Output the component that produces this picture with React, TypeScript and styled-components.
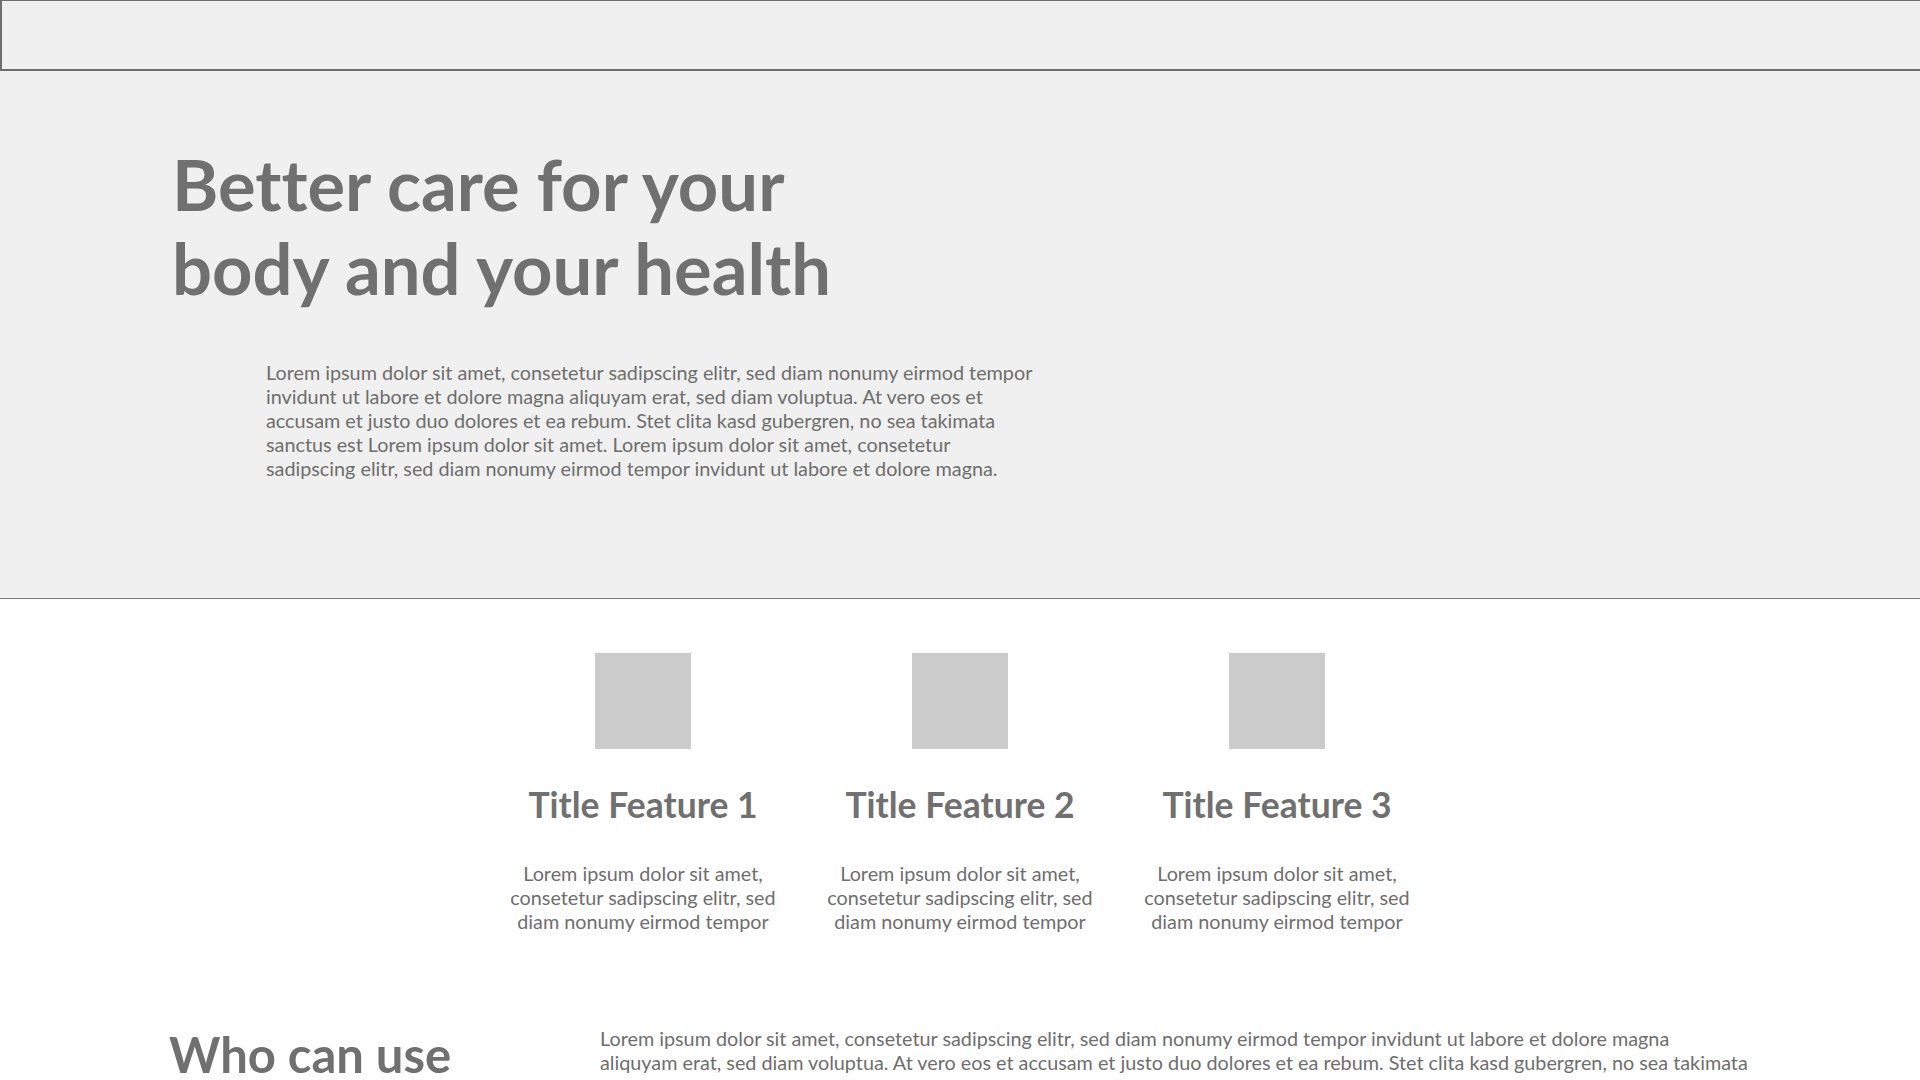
import styled, { createGlobalStyle } from "styled-components";

const GlobalStyle = createGlobalStyle`
  html, body {
    margin: 0;
    padding: 0;
    background: #ffffff;
    font-family: Lato, "Open Sans", sans-serif;
    font-variant-ligatures: none;
    color: #707070;
  }
  * {
    box-sizing: border-box;
  }
`;

const Page = styled.div`
  width: 100%;
  height: 1080px;
  overflow: hidden;
`;

const Header = styled.header`
  height: 71px;
  background: #f0f0f0;
  border-top: 1px solid #6e6e6e;
  border-left: 2px solid #6e6e6e;
  border-bottom: 2px solid #6e6e6e;
`;

const Hero = styled.section`
  background: #f0f0f0;
  border-bottom: 1px solid #7a7a7a;
  padding: 71px 0 118px 172px;
`;

const HeroTitle = styled.h1`
  margin: 0;
  font-size: 70.5px;
  line-height: 84px;
  font-weight: 700;
  color: #707070;
`;

const HeroText = styled.p`
  margin: 50px 0 0 94px;
  width: 775px;
  font-size: 19.8px;
  line-height: 24px;
  color: #6e6e6e;
`;

const Features = styled.section`
  display: grid;
  grid-template-columns: repeat(3, 300px);
  column-gap: 17px;
  justify-content: center;
  padding-top: 54px;
`;

const Feature = styled.div`
  display: flex;
  flex-direction: column;
  align-items: center;
  text-align: center;
`;

const Placeholder = styled.div`
  width: 96px;
  height: 96px;
  background: #cbcbcb;
`;

const FeatureTitle = styled.h3`
  margin: 34px 0 0;
  font-size: 35.5px;
  line-height: 43px;
  font-weight: 700;
  color: #707070;
`;

const FeatureText = styled.p`
  margin: 35px 0 0;
  font-size: 19.8px;
  line-height: 24px;
  color: #6e6e6e;
`;

const Who = styled.section`
  display: grid;
  grid-template-columns: 431px 1150px;
  padding: 92px 0 0 169px;
`;

const WhoTitle = styled.h2`
  margin: 0;
  font-size: 49px;
  line-height: 59px;
  font-weight: 700;
  color: #707070;
`;

const WhoText = styled.p`
  margin: 1px 0 0;
  font-size: 19.8px;
  line-height: 24px;
  color: #6e6e6e;
`;

const features = [
  { title: "Title Feature 1" },
  { title: "Title Feature 2" },
  { title: "Title Feature 3" },
];

const lorem =
  "Lorem ipsum dolor sit amet, consetetur sadipscing elitr, sed diam nonumy eirmod tempor invidunt ut labore et dolore magna aliquyam erat, sed diam voluptua. At vero eos et accusam et justo duo dolores et ea rebum. Stet clita kasd gubergren, no sea takimata sanctus est Lorem ipsum dolor sit amet. Lorem ipsum dolor sit amet, consetetur sadipscing elitr, sed diam nonumy eirmod tempor invidunt ut labore et dolore magna.";

const App = () => {
  return (
    <Page>
      <GlobalStyle />
      <Header />
      <Hero>
        <HeroTitle>
          Better care for your
          <br />
          body and your health
        </HeroTitle>
        <HeroText>{lorem}</HeroText>
      </Hero>
      <Features>
        {features.map((f) => (
          <Feature key={f.title}>
            <Placeholder />
            <FeatureTitle>{f.title}</FeatureTitle>
            <FeatureText>
              Lorem ipsum dolor sit amet,
              <br />
              consetetur sadipscing elitr, sed
              <br />
              diam nonumy eirmod tempor
            </FeatureText>
          </Feature>
        ))}
      </Features>
      <Who>
        <WhoTitle>Who can use</WhoTitle>
        <WhoText>
          Lorem ipsum dolor sit amet, consetetur sadipscing elitr, sed diam
          nonumy eirmod tempor invidunt ut labore et dolore magna aliquyam
          erat, sed diam voluptua. At vero eos et accusam et justo duo dolores
          et ea rebum. Stet clita kasd gubergren, no sea takimata sanctus est
          Lorem ipsum dolor sit amet.
        </WhoText>
      </Who>
    </Page>
  );
};

export default App;
